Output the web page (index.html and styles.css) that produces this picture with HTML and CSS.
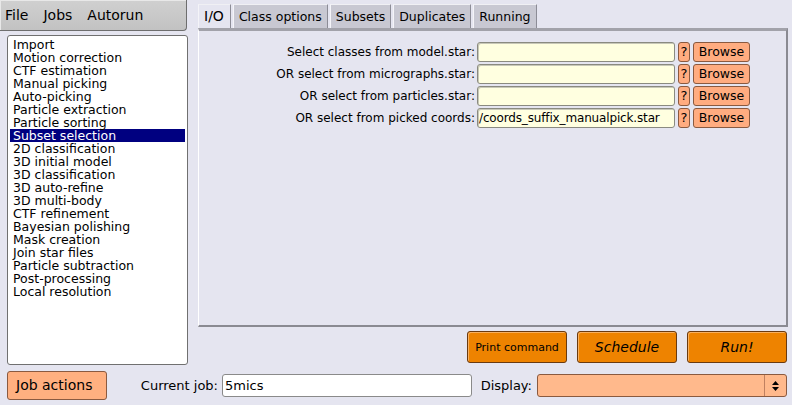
FILE: index.html
```html
<!DOCTYPE html>
<html>
<head>
<meta charset="utf-8">
<title>RELION</title>
<link rel="stylesheet" href="styles.css">
</head>
<body>
<div class="main">
  <div class="sidebar">
    <div class="menubar">
      <span class="menu-item">File</span>
      <span class="menu-item">Jobs</span>
      <span class="menu-item">Autorun</span>
    </div>
    <ul class="joblist">
      <li>Import</li>
      <li>Motion correction</li>
      <li>CTF estimation</li>
      <li>Manual picking</li>
      <li>Auto-picking</li>
      <li>Particle extraction</li>
      <li>Particle sorting</li>
      <li class="selected">Subset selection</li>
      <li>2D classification</li>
      <li>3D initial model</li>
      <li>3D classification</li>
      <li>3D auto-refine</li>
      <li>3D multi-body</li>
      <li>CTF refinement</li>
      <li>Bayesian polishing</li>
      <li>Mask creation</li>
      <li>Join star files</li>
      <li>Particle subtraction</li>
      <li>Post-processing</li>
      <li>Local resolution</li>
    </ul>
  </div>
  <div class="workspace">
    <div class="tabs">
      <div class="tab active">I/O</div>
      <div class="tab">Class options</div>
      <div class="tab">Subsets</div>
      <div class="tab">Duplicates</div>
      <div class="tab">Running</div>
    </div>
    <div class="panel">
      <div class="form">
        <label class="flabel">Select classes from model.star:</label>
        <div class="finput"></div>
        <div class="help">?</div>
        <div class="browse">Browse</div>

        <label class="flabel">OR select from micrographs.star:</label>
        <div class="finput"></div>
        <div class="help">?</div>
        <div class="browse">Browse</div>

        <label class="flabel">OR select from particles.star:</label>
        <div class="finput"></div>
        <div class="help">?</div>
        <div class="browse">Browse</div>

        <label class="flabel">OR select from picked coords:</label>
        <div class="finput filled">/coords_suffix_manualpick.star</div>
        <div class="help">?</div>
        <div class="browse">Browse</div>
      </div>
    </div>
    <div class="actions">
      <div class="action print">Print command</div>
      <div class="action big">Schedule</div>
      <div class="action big">Run!</div>
    </div>
  </div>
</div>
<div class="footer">
  <div class="jobactions">Job actions</div>
  <span class="cj-label">Current job:</span>
  <div class="cj-input">5mics</div>
  <span class="disp-label">Display:</span>
  <div class="display">
    <div class="arrows">
      <svg width="9" height="12" viewBox="0 0 9 12"><path d="M4.5 1 L8 5 L1 5 Z M4.5 11 L8 7 L1 7 Z" fill="#000"/></svg>
    </div>
  </div>
</div>
</body>
</html>
```

FILE: styles.css
```css
* { box-sizing: border-box; }
html, body {
  margin: 0;
  padding: 0;
}
body {
  width: 792px;
  height: 405px;
  overflow: hidden;
  background: #e5e5f0;
  font-family: "DejaVu Sans", sans-serif;
  font-size: 13px;
  color: #000;
}
.main {
  display: flex;
  height: 366px;
}
.sidebar {
  width: 198px;
  flex: none;
  display: flex;
  flex-direction: column;
}
.menubar {
  width: 187px;
  height: 31px;
  border: 1px solid #6e6e6e;
  border-radius: 0 0 4px 0;
  border-left: none;
  border-top: none;
  background: linear-gradient(#d0d0d0, #c2c2c2);
  box-shadow: inset 1px 1px 0 #e8e8e8;
  display: flex;
  align-items: center;
  padding-left: 5px;
  gap: 15px;
  font-size: 14px;
}
.joblist {
  list-style: none;
  margin: 4px 0 0 7px;
  padding: 2px 2px;
  width: 181px;
  height: 330px;
  background: #fff;
  border: 1px solid #707070;
  border-radius: 3px;
  font-size: 12.5px;
}
.joblist li {
  height: 13px;
  line-height: 13px;
  padding-left: 3px;
  white-space: nowrap;
}
.joblist li.selected {
  background: #000080;
  color: #fff;
}
.workspace {
  width: 591px;
  display: flex;
  flex-direction: column;
}
.tabs {
  display: flex;
  margin-top: 4px;
  height: 24px;
  gap: 2px;
}
.tab {
  height: 24px;
  padding: 0 5px;
  line-height: 23px;
  font-size: 12.5px;
  white-space: nowrap;
  background: #c8c8d2;
  border-left: 1px solid #f4f4f8;
  border-right: 1px solid #8c8c96;
  border-top: 1px solid #f0f0f4;
}
.tab.active {
  background: #e5e5f0;
  padding: 0 6px 0 5px;
  font-size: 14px;
}
.panel {
  height: 299px;
  width: 590px;
  border-top: 3px solid #a2a2aa;
  border-left: 1px solid #ffffff;
  border-right: 2px solid #8a8a92;
  border-bottom: 2px solid #8a8a92;
  background: #e5e5f0;
}
.form {
  display: grid;
  grid-template-columns: 276px 198px 13px 58px;
  column-gap: 2px;
  row-gap: 2px;
  padding-top: 11px;
  align-items: center;
}
.form > * { height: 20px; }
.flabel {
  text-align: right;
  line-height: 20px;
  font-size: 12px;
  white-space: nowrap;
}
.finput {
  background: #ffffe0;
  border: 1px solid #8a8a80;
  border-radius: 3px;
  box-shadow: inset 1px 1px 0 #c8c8b8;
  overflow: hidden;
  line-height: 18px;
  padding-left: 1px;
  font-size: 12px;
  letter-spacing: -0.15px;
  white-space: nowrap;
}
.help {
  margin-left: 1px;
  background: #ffac80;
  border: 1px solid #8a5a40;
  border-radius: 3px;
  text-align: center;
  line-height: 18px;
  font-size: 13px;
}
.browse {
  margin-left: 1px;
  background: #ffac80;
  border: 1px solid #8a5a40;
  border-radius: 3px;
  text-align: center;
  line-height: 18px;
  font-size: 12.5px;
}
.actions {
  display: flex;
  justify-content: flex-end;
  gap: 10px;
  margin-top: 4px;
  padding-right: 2px;
}
.action {
  width: 100px;
  height: 32px;
  background: #ee8300;
  border: 1px solid #6a3a10;
  border-radius: 3px;
  box-shadow: inset 1px 1px 0 #f8b060;
  display: flex;
  align-items: center;
  justify-content: center;
  white-space: nowrap;
}
.action.print {
  font-size: 11px;
}
.action.big {
  font-style: italic;
  font-size: 14px;
}
.footer {
  display: flex;
  align-items: center;
  height: 39px;
  padding-left: 7px;
}
.jobactions {
  width: 100px;
  flex: none;
  height: 29px;
  background: #ffb080;
  border: 1px solid #8a5a40;
  border-radius: 3px;
  font-size: 14px;
  line-height: 27px;
  padding-left: 8px;
  white-space: nowrap;
}
.cj-label {
  width: 113px;
  flex: none;
  text-align: right;
  padding-right: 2px;
  font-size: 13px;
  white-space: nowrap;
}
.cj-input {
  margin-left: 2px;
  width: 250px;
  flex: none;
  height: 23px;
  background: #fff;
  border: 1px solid #8a8a8a;
  border-radius: 3px;
  font-size: 13px;
  line-height: 21px;
  padding-left: 2px;
}
.disp-label {
  width: 63px;
  flex: none;
  text-align: right;
  padding-right: 3px;
  font-size: 13px;
  white-space: nowrap;
}
.display {
  margin-left: 2px;
  width: 250px;
  flex: none;
  height: 23px;
  background: #ffb98c;
  border: 1px solid #8a5a40;
  border-radius: 3px;
  display: flex;
  justify-content: flex-end;
}
.arrows {
  width: 22px;
  border-left: 1px solid #c08060;
  display: flex;
  align-items: center;
  justify-content: center;
}
```
